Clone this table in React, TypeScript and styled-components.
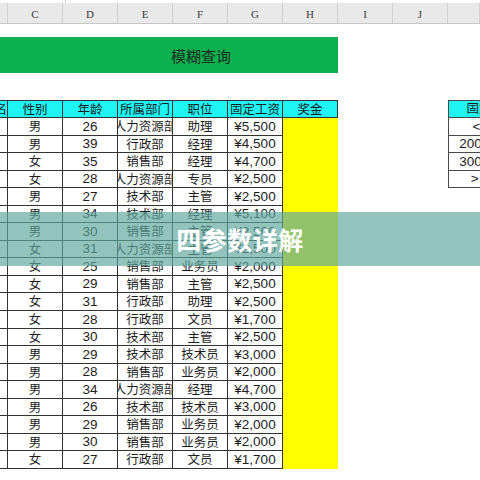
import React from "react";
import styled, { createGlobalStyle } from "styled-components";

const Global = createGlobalStyle`
  html, body { margin: 0; padding: 0; background: #ffffff; }
  body { width: 480px; height: 480px; overflow: hidden; font-family: "Liberation Sans", "Noto Sans CJK SC", sans-serif; }
  #root { width: 480px; height: 480px; }
`;

const Page = styled.div`
  position: relative;
  width: 480px;
  height: 480px;
  overflow: hidden;
  background: #ffffff;
`;

const TopStrip = styled.div`
  height: 3px;
  background: #ffffff;
  display: flex;
`;

const TopMark = styled.div`
  margin-left: 65px;
  width: 1px;
  height: 3px;
  background: #c8c8c8;
`;

const ColHeader = styled.div`
  display: grid;
  grid-template-columns: 8px repeat(8, 55px) 1fr;
  height: 21px;
  background: #e9e9e9;
  border-bottom: 1px solid #c6c6c6;
  box-sizing: border-box;
`;

const ColLetter = styled.div`
  display: flex;
  align-items: center;
  justify-content: center;
  font-family: "Liberation Serif", "DejaVu Serif", serif;
  font-size: 11px;
  color: #3a3a3a;
  border-right: 1px solid #cfcfcf;
  box-sizing: border-box;
  padding-top: 1px;
`;

const Sheet = styled.div`
  display: flex;
  flex-direction: column;
  padding-top: 13px;
`;

const Banner = styled.div`
  width: 338px;
  height: 36px;
  background: #0bb04f;
  display: flex;
  align-items: center;
  justify-content: center;
  padding-left: 64px;
  box-sizing: border-box;
  font-family: "Noto Sans CJK SC", sans-serif;
  font-size: 15px;
  color: #1f2a1f;
`;

const Tables = styled.div`
  display: flex;
  margin-top: 27px;
  gap: 110px;
`;

const MainTable = styled.div`
  display: grid;
  grid-template-columns: 8px repeat(6, 55px);
  grid-template-rows: 18px repeat(20, 17.55px);
  width: 338px;
  flex: none;
`;

const LookupTable = styled.div`
  display: grid;
  grid-template-columns: 86px;
  grid-template-rows: 18px repeat(4, 17.55px);
  border-left: 1px solid #4a4a4a;
  align-self: flex-start;
  flex: none;
`;

const Cell = styled.div<{ $head?: boolean; $yellow?: boolean; $num?: boolean; $clipRight?: boolean }>`
  box-sizing: border-box;
  display: flex;
  align-items: center;
  justify-content: ${(p) => (p.$clipRight ? "flex-end" : "center")};
  overflow: hidden;
  white-space: nowrap;
  background: ${(p) => (p.$head ? "#1ff5f5" : p.$yellow ? "#ffff00" : "transparent")};
  border-right: ${(p) => (p.$yellow && !p.$head ? "none" : "1px solid #333")};
  border-bottom: ${(p) => (p.$yellow && !p.$head ? "none" : "1px solid #333")};
  border-top: ${(p) => (p.$head ? "1px solid #333" : "none")};
  font-family: ${(p) => (p.$num ? '"Liberation Sans", "Noto Sans CJK SC", sans-serif' : '"Noto Sans CJK SC", sans-serif')};
  font-size: ${(p) => (p.$num ? "13.5px" : "12.5px")};
  color: #1c1c1c;
  line-height: 1;
`;

const LookupCell = styled.div<{ $head?: boolean }>`
  box-sizing: border-box;
  display: flex;
  align-items: center;
  justify-content: center;
  white-space: nowrap;
  overflow: hidden;
  background: ${(p) => (p.$head ? "#1ff5f5" : "#ffffff")};
  border-right: 1px solid #4a4a4a;
  border-bottom: 1px solid #4a4a4a;
  border-top: ${(p) => (p.$head ? "1px solid #4a4a4a" : "none")};
  font-family: "Liberation Sans", "Noto Sans CJK SC", sans-serif;
  font-size: ${(p) => (p.$head ? "12.5px" : "13.5px")};
  color: #1c1c1c;
  line-height: 1;
`;

const Overlay = styled.div`
  position: absolute;
  left: 0;
  top: 212px;
  width: 480px;
  height: 54px;
  background: rgba(95, 166, 158, 0.68);
  display: flex;
  align-items: center;
  justify-content: center;
`;

const OverlayTitle = styled.div`
  font-family: "Noto Sans CJK SC", sans-serif;
  font-weight: 700;
  font-size: 25px;
  color: #ffffff;
  letter-spacing: 0.5px;
`;

const letters = ["C", "D", "E", "F", "G", "H", "I", "J"];

const rows: [string, string, string, string, string][] = [
  ["男", "26", "人力资源部", "助理", "¥5,500"],
  ["男", "39", "行政部", "经理", "¥4,500"],
  ["女", "35", "销售部", "经理", "¥4,700"],
  ["女", "28", "人力资源部", "专员", "¥2,500"],
  ["男", "27", "技术部", "主管", "¥2,500"],
  ["男", "34", "技术部", "经理", "¥5,100"],
  ["男", "30", "销售部", "主管", "¥2,500"],
  ["女", "31", "人力资源部", "主管", "¥2,500"],
  ["女", "25", "销售部", "业务员", "¥2,000"],
  ["女", "29", "销售部", "主管", "¥2,500"],
  ["女", "31", "行政部", "助理", "¥2,500"],
  ["女", "28", "行政部", "文员", "¥1,700"],
  ["女", "30", "技术部", "主管", "¥2,500"],
  ["男", "29", "技术部", "技术员", "¥3,000"],
  ["男", "28", "销售部", "业务员", "¥2,000"],
  ["男", "34", "人力资源部", "经理", "¥4,700"],
  ["男", "26", "技术部", "技术员", "¥3,000"],
  ["男", "29", "销售部", "业务员", "¥2,000"],
  ["男", "30", "销售部", "业务员", "¥2,000"],
  ["女", "27", "行政部", "文员", "¥1,700"],
];

const headers = ["性别", "年龄", "所属部门", "职位", "固定工资", "奖金"];
const lookup = ["<2000", "2000-3000", "3000-5000", "> 5000"];

export default function App() {
  return (
    <Page>
      <Global />
      <TopStrip>
        <TopMark />
      </TopStrip>
      <ColHeader>
        <ColLetter />
        {letters.map((l) => (
          <ColLetter key={l}>{l}</ColLetter>
        ))}
        <ColLetter />
      </ColHeader>
      <Sheet>
        <Banner>模糊查询</Banner>
        <Tables>
          <MainTable>
            <Cell $head $clipRight>姓名</Cell>
            {headers.map((h) => (
              <Cell key={h} $head>
                {h}
              </Cell>
            ))}
            {rows.map((r, i) => (
              <React.Fragment key={i}>
                <Cell />
                <Cell>{r[0]}</Cell>
                <Cell $num>{r[1]}</Cell>
                <Cell>{r[2]}</Cell>
                <Cell>{r[3]}</Cell>
                <Cell $num>{r[4]}</Cell>
                <Cell $yellow />
              </React.Fragment>
            ))}
          </MainTable>
          <LookupTable>
            <LookupCell $head>固定工资</LookupCell>
            {lookup.map((v) => (
              <LookupCell key={v}>{v}</LookupCell>
            ))}
          </LookupTable>
        </Tables>
      </Sheet>
      <Overlay>
        <OverlayTitle>四参数详解</OverlayTitle>
      </Overlay>
    </Page>
  );
}
